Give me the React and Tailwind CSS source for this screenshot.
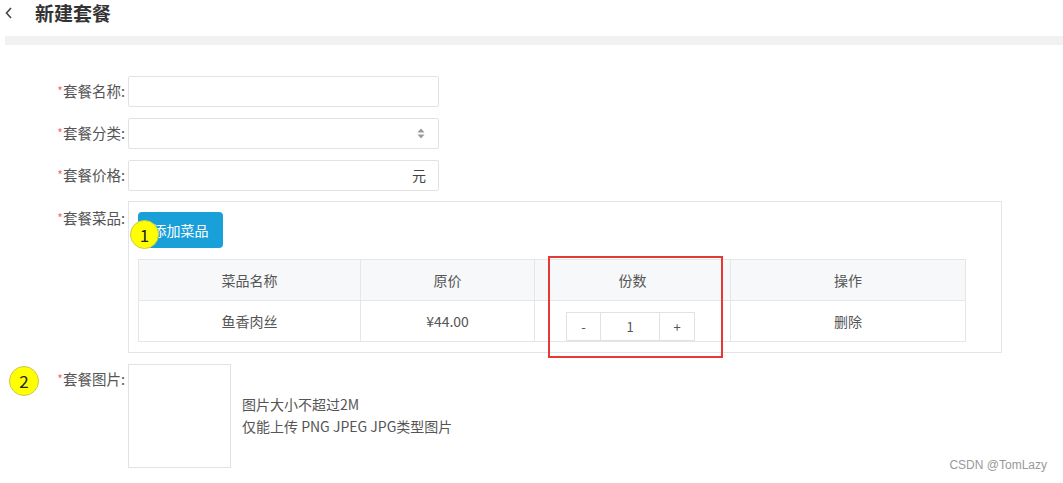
import React from 'react'

const font = { fontFamily: '"Noto Sans CJK SC", "Noto Sans", sans-serif' }

function Label({ children }) {
  return (
    <div className="w-[128px] shrink-0 pr-[3px] text-right text-[14.5px] leading-[30px] text-[#555]">
      <span className="text-[#f56c6c] text-[12px] align-top">*</span>
      {children}:
    </div>
  )
}

function Badge({ n, className }) {
  return (
    <div
      className={`absolute flex items-center justify-center rounded-full bg-[#ffff00] border border-[#c8c850] text-[17px] text-[#222] ${className}`}
    >
      {n}
    </div>
  )
}

export default function App() {
  const dishes = [{ name: '鱼香肉丝', price: '¥44.00', count: 1 }]

  return (
    <div className="relative w-[1063px] h-[483px] bg-white overflow-hidden" style={font}>
      {/* 标题 */}
      <div className="flex items-center h-[26px] pl-[5px]">
        <svg width="8" height="12" viewBox="0 0 8 12" className="text-[#444]">
          <path d="M6 1 L1.5 6 L6 11" fill="none" stroke="currentColor" strokeWidth="1.6" />
        </svg>
        <h1 className="ml-[22px] text-[19px] font-bold text-[#333] leading-[24px]">新建套餐</h1>
      </div>
      <div className="ml-[5px] mt-[10px] h-[9px] bg-[#f1f1f1]" />

      {/* 表单 */}
      <div className="flex flex-col mt-[31px]">
        <div className="flex">
          <Label>套餐名称</Label>
          <div className="w-[311px] h-[31px] border border-[#e2e2e2] rounded-[2px]" />
        </div>

        <div className="flex mt-[11px]">
          <Label>套餐分类</Label>
          <div className="w-[311px] h-[31px] border border-[#e2e2e2] rounded-[2px] flex items-center justify-end pr-[13px]">
            <svg width="8" height="11" viewBox="0 0 8 11">
              <path d="M4 0.5 L7.5 4.5 H0.5 Z" fill="#999" />
              <path d="M4 10.5 L7.5 6.5 H0.5 Z" fill="#999" />
            </svg>
          </div>
        </div>

        <div className="flex mt-[11px]">
          <Label>套餐价格</Label>
          <div className="w-[311px] h-[31px] border border-[#e2e2e2] rounded-[2px] flex items-center justify-end pr-[12px] text-[14px] text-[#444]">
            元
          </div>
        </div>

        <div className="flex mt-[10px]">
          <div className="pt-[2px]">
            <Label>套餐菜品</Label>
          </div>
          <div className="relative w-[874px] h-[152px] border border-[#e4e4e4] pt-[10px] pl-[9px]">
            <button className="w-[85px] h-[36px] rounded-[4px] bg-[#1aa0d9] text-white text-[14px]">
              添加菜品
            </button>
            <Badge n="1" className="left-[1px] top-[18px] w-[29px] h-[29px]" />
            <table className="mt-[11px] w-[828px] border-collapse text-[14px] text-[#555]">
              <thead>
                <tr className="bg-[#f7f8fa] h-[41px]">
                  <th className="w-[222px] border border-[#e6e6e6] font-normal">菜品名称</th>
                  <th className="w-[174px] border border-[#e6e6e6] font-normal">原价</th>
                  <th className="w-[196px] border border-[#e6e6e6] font-normal">份数</th>
                  <th className="border border-[#e6e6e6] font-normal">操作</th>
                </tr>
              </thead>
              <tbody>
                {dishes.map((d) => (
                  <tr key={d.name} className="h-[41px]">
                    <td className="border border-[#e6e6e6] text-center">{d.name}</td>
                    <td className="border border-[#e6e6e6] text-center">{d.price}</td>
                    <td className="border border-[#e6e6e6] align-bottom">
                      <div className="flex justify-center pr-[4px]">
                        <div className="flex h-[29px] border border-[#e2e2e2] text-[13px] text-[#555]">
                          <div className="w-[34px] flex items-center justify-center border-r border-[#e2e2e2]">-</div>
                          <div className="w-[59px] flex items-center justify-center border-r border-[#e2e2e2]">{d.count}</div>
                          <div className="w-[34px] flex items-center justify-center">+</div>
                        </div>
                      </div>
                    </td>
                    <td className="border border-[#e6e6e6] text-center">删除</td>
                  </tr>
                ))}
              </tbody>
            </table>
            {/* 标注框 */}
            <div className="absolute left-[419px] top-[54px] w-[175px] h-[102px] border-2 border-[#e53935]" />
          </div>
        </div>

        <div className="relative flex mt-[11px]">
          <Badge n="2" className="left-[9px] top-[2px] w-[30px] h-[30px]" />
          <div>
            <Label>套餐图片</Label>
          </div>
          <div className="w-[103px] h-[104px] border border-[#e2e2e2]" />
          <div className="ml-[11px] pt-[29px] text-[14px] leading-[22px] text-[#555]">
            <p>图片大小不超过2M</p>
            <p>仅能上传 PNG JPEG JPG类型图片</p>
          </div>
        </div>
      </div>

      <div className="absolute right-[16px] bottom-[9px] text-[12px] text-[#999]" style={{ fontFamily: '"Liberation Sans", sans-serif' }}>
        CSDN @TomLazy
      </div>
    </div>
  )
}
